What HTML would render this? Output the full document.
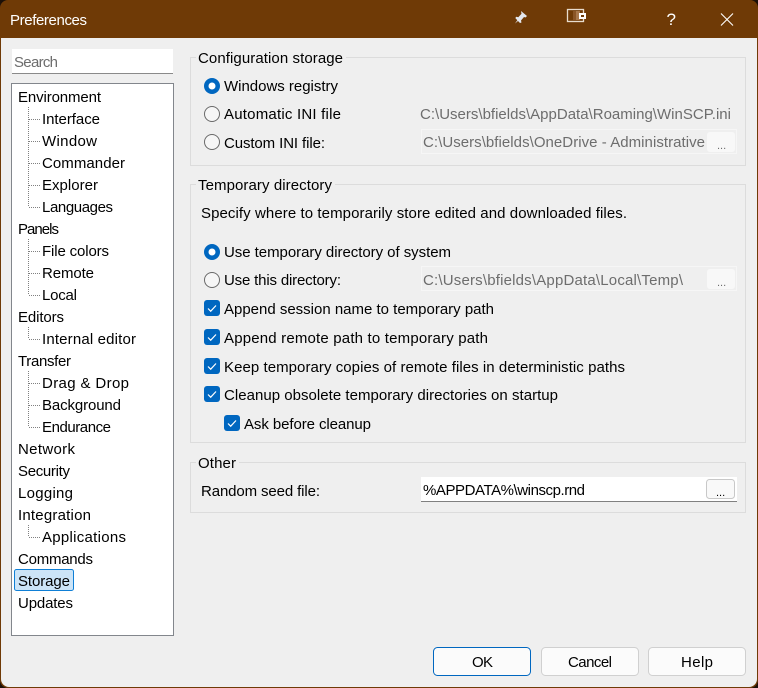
<!DOCTYPE html>
<html><head><meta charset="utf-8"><title>Preferences</title>
<style>
html,body{margin:0;padding:0;width:758px;height:688px;overflow:hidden;background:#1c1008}
svg{display:block}
text{font-family:"Liberation Sans",sans-serif;font-size:15px;fill:#000}
.g{fill:#6d6d6d}
.t{fill:#fff}
.b{fill:none;stroke:#dcdcdc;stroke-width:1}
.d{stroke:#808080;stroke-width:1;stroke-dasharray:1 1;fill:none;shape-rendering:crispEdges}
.btn{fill:#fbfbfb;stroke:#d0d0d0}
.e{font-size:11px}
</style></head><body>
<svg width="758" height="688" viewBox="0 0 758 688" xmlns="http://www.w3.org/2000/svg">
<rect x="0" y="0" width="758" height="688" rx="8" fill="#6f3a06"/>
<path d="M1 38H757V679a8 8 0 0 1-8 8H9a8 8 0 0 1-8-8Z" fill="#efefef"/>
<text class="t" x="10" y="25" textLength="77">Preferences</text>
<!-- pin -->
<path d="M521 11l6 5-1.500 1.500-1.500-.5-3 3.500.5 2-1.500.5-2-2-3 2.500 2.300-3.300-2-2.200 1-1.300 2 .5 3.200-3.400-.3-1.600z" fill="#e4e7ee"/>
<!-- window icon -->
<rect x="567.500" y="9.500" width="16" height="12" fill="none" stroke="#e8dccd" stroke-width="1.300"/>
<rect x="573" y="11" width="3" height="9" fill="#8a5526"/>
<rect x="576" y="11" width="4" height="9" fill="#a8784c"/>
<rect x="579" y="13" width="7" height="6" fill="#fff"/>
<rect x="581" y="15" width="3" height="2" fill="#6f3a06"/>
<text class="t" x="666.500" y="25" style="font-size:17px" textLength="8">?</text>
<path d="M721 13.500 733 25.500M733 13.500 721 25.500" stroke="#fff" stroke-width="1.100" fill="none"/>

<!-- search -->
<rect x="12" y="49" width="161" height="24" fill="#fff"/>
<rect x="12" y="73" width="161" height="1" fill="#8a8a8a"/>
<text class="g" x="14" y="67" textLength="44">Search</text>

<!-- tree -->
<rect x="11.500" y="83.500" width="162" height="552" fill="#fff" stroke="#82868c"/>
<path class="d" d="M28.500 107V207M28.500 239V295M28.500 327V339M28.500 371V427M28.500 525V537"/>
<path class="d" d="M29 119.500H40M29 141.500H40M29 163.500H40M29 185.500H40M29 207.500H40M29 251.500H40M29 273.500H40M29 295.500H40M29 339.500H40M29 383.500H40M29 405.500H40M29 427.500H40M29 537.500H40"/>
<rect x="14.500" y="569.500" width="59" height="21" rx="2" fill="#cce4f7" stroke="#0f7fd6"/>
<g>
<text x="18" y="102" textLength="83">Environment</text>
<text x="42" y="124" textLength="58">Interface</text>
<text x="42" y="146" textLength="55">Window</text>
<text x="42" y="168" textLength="83">Commander</text>
<text x="42" y="190" textLength="56">Explorer</text>
<text x="42" y="212" textLength="71">Languages</text>
<text x="18" y="234" textLength="41">Panels</text>
<text x="42" y="256" textLength="67">File colors</text>
<text x="42" y="278" textLength="52">Remote</text>
<text x="42" y="300" textLength="35">Local</text>
<text x="18" y="322" textLength="46">Editors</text>
<text x="42" y="344" textLength="94">Internal editor</text>
<text x="18" y="366" textLength="53">Transfer</text>
<text x="42" y="388" textLength="87">Drag &amp; Drop</text>
<text x="42" y="410" textLength="79">Background</text>
<text x="42" y="432" textLength="69">Endurance</text>
<text x="18" y="454" textLength="57">Network</text>
<text x="18" y="476" textLength="52">Security</text>
<text x="18" y="498" textLength="55">Logging</text>
<text x="18" y="520" textLength="73">Integration</text>
<text x="42" y="542" textLength="84">Applications</text>
<text x="18" y="564" textLength="75">Commands</text>
<text x="18" y="586" textLength="52">Storage</text>
<text x="18" y="608" textLength="55">Updates</text>
</g>

<!-- Configuration storage -->
<path class="b" d="M196 57.500H190.500V165.500H745.500V57.500H346"/>
<text x="198" y="63" textLength="145">Configuration storage</text>
<circle cx="212" cy="86" r="8" fill="#0067c0"/><circle cx="212" cy="86" r="3.500" fill="#fff"/>
<text x="224" y="91" textLength="114">Windows registry</text>
<circle cx="212" cy="114" r="7.500" fill="#f6f6f6" stroke="#6a6a6a"/>
<text x="224" y="119" textLength="117">Automatic INI file</text>
<text class="g" x="420" y="119" textLength="311">C:\Users\bfields\AppData\Roaming\WinSCP.ini</text>
<circle cx="212" cy="142" r="7.500" fill="#f6f6f6" stroke="#6a6a6a"/>
<text x="224" y="148" textLength="101">Custom INI file:</text>
<rect x="421.500" y="129.500" width="315" height="24" fill="none" stroke="#f6f6f6"/>
<text class="g" x="423" y="147" textLength="282">C:\Users\bfields\OneDrive - Administrative</text>
<rect x="707" y="132" width="28" height="20" rx="3" fill="#f8f8f8"/>
<text class="g e" x="717" y="149">...</text>

<!-- Temporary directory -->
<path class="b" d="M196 184.500H190.500V442.500H745.500V184.500H335"/>
<text x="198" y="190" textLength="134">Temporary directory</text>
<text x="201" y="218" textLength="426">Specify where to temporarily store edited and downloaded files.</text>
<circle cx="212" cy="252" r="8" fill="#0067c0"/><circle cx="212" cy="252" r="3.500" fill="#fff"/>
<text x="224" y="257" textLength="227">Use temporary directory of system</text>
<circle cx="212" cy="280" r="7.500" fill="#f6f6f6" stroke="#6a6a6a"/>
<text x="224" y="285" textLength="117">Use this directory:</text>
<rect x="421.500" y="266.500" width="315" height="24" fill="none" stroke="#f6f6f6"/>
<text class="g" x="423" y="285" textLength="260">C:\Users\bfields\AppData\Local\Temp\</text>
<rect x="707" y="269" width="28" height="20" rx="3" fill="#f8f8f8"/>
<text class="g e" x="717" y="286">...</text>

<g fill="#0067c0">
<rect x="204" y="300" width="16" height="16" rx="3"/>
<rect x="204" y="329" width="16" height="16" rx="3"/>
<rect x="204" y="358" width="16" height="16" rx="3"/>
<rect x="204" y="386" width="16" height="16" rx="3"/>
<rect x="224" y="415" width="16" height="16" rx="3"/>
</g>
<g fill="none" stroke="#fff" stroke-width="1.200">
<path d="M208 308.500l2.700 2.700 5.300-5.700"/>
<path d="M208 337.500l2.700 2.700 5.300-5.700"/>
<path d="M208 366.500l2.700 2.700 5.300-5.700"/>
<path d="M208 394.500l2.700 2.700 5.300-5.700"/>
<path d="M228 423.500l2.700 2.700 5.300-5.700"/>
</g>
<text x="224" y="314" textLength="270">Append session name to temporary path</text>
<text x="224" y="343" textLength="264">Append remote path to temporary path</text>
<text x="224" y="372" textLength="401">Keep temporary copies of remote files in deterministic paths</text>
<text x="224" y="400" textLength="334">Cleanup obsolete temporary directories on startup</text>
<text x="244" y="429" textLength="127">Ask before cleanup</text>

<!-- Other -->
<path class="b" d="M196 462.500H190.500V512.500H745.500V462.500H239"/>
<text x="198" y="468" textLength="38">Other</text>
<text x="201" y="496" textLength="119">Random seed file:</text>
<rect x="421" y="477" width="316" height="24" fill="#fff"/>
<rect x="421" y="501" width="316" height="1" fill="#808080"/>
<text x="423" y="495" textLength="162">%APPDATA%\winscp.rnd</text>
<rect x="706.500" y="479.500" width="28" height="19" rx="3" fill="#f9f9f9" stroke="#c8c8c8"/>
<text class="e" x="716" y="496">...</text>

<!-- buttons -->
<rect x="433.500" y="647.500" width="97" height="28" rx="4" fill="#fbfbfb" stroke="#0067c0"/>
<rect x="541.500" y="647.500" width="97" height="28" rx="4" class="btn"/>
<rect x="648.500" y="647.500" width="97" height="28" rx="4" class="btn"/>
<text x="472" y="667" textLength="21">OK</text>
<text x="568" y="667" textLength="44">Cancel</text>
<text x="681" y="667" textLength="32">Help</text>
</svg>
</body></html>
